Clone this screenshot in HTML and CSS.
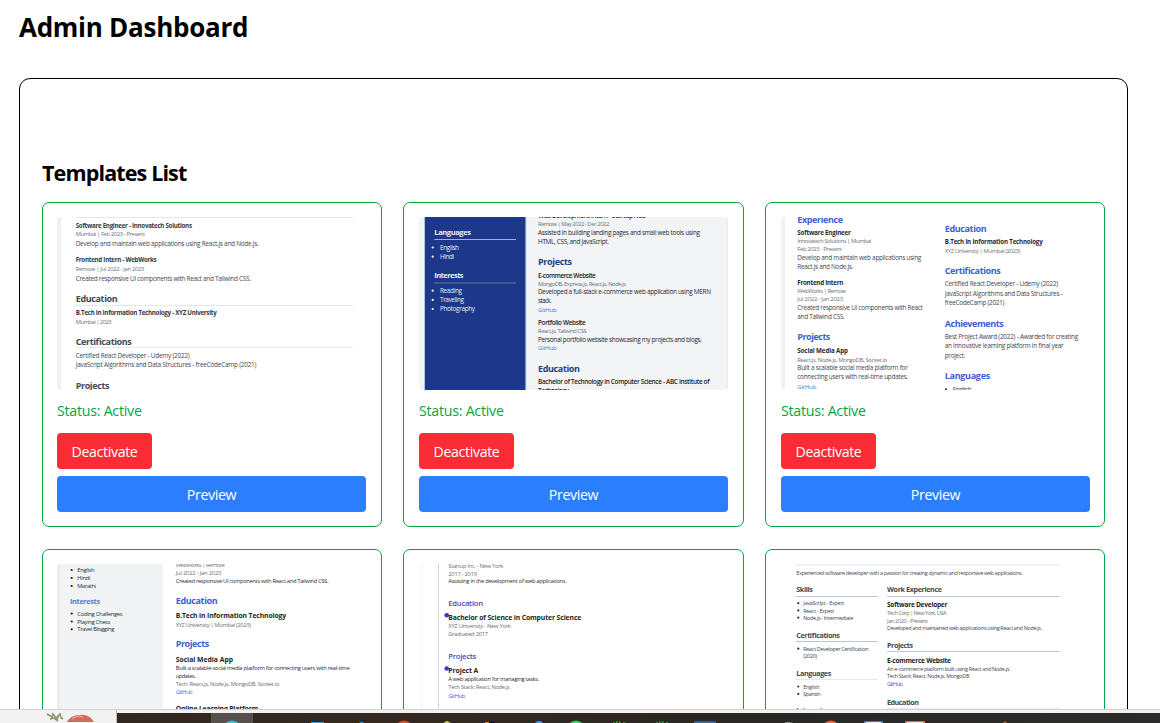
FILE: index.html
```
<!DOCTYPE html>
<html lang="en">
<head>
<meta charset="utf-8">
<title>Admin Dashboard</title>
<link rel="stylesheet" href="styles.css">
</head>
<body>
<main class="page">
  <h1 class="page-title">Admin Dashboard</h1>
  <section class="panel">
    <h2 class="panel-title">Templates List</h2>
    <div class="grid">

      <article class="card">
        <svg class="thumb slate" viewBox="0 0 309 173">
          <rect width="4" height="173" fill="#f0f0f1"/>
          <text class="h" x="18.7" y="-1" textLength="46">Experience</text>
          <path class="rule" d="M18.7 .5H296.3M18.7 88.5H296.3M18.7 130.5H296.3"/>
          <text class="b" x="18.7" y="10.7" textLength="116.3">Software Engineer - Innovatech Solutions</text>
          <text class="m" x="18.7" y="19.3" textLength="69.3">Mumbai | Feb 2023 - Present</text>
          <text x="18.7" y="29.3" textLength="183">Develop and maintain web applications using React.js and Node.js.</text>
          <text class="b" x="18.7" y="45" textLength="81">Frontend Intern - WebWorks</text>
          <text class="m" x="18.7" y="54" textLength="68.7">Remote | Jul 2022 - Jan 2023</text>
          <text x="18.7" y="64" textLength="175.3">Created responsive UI components with React and Tailwind CSS.</text>
          <text class="h" x="18.7" y="84.9" textLength="42">Education</text>
          <text class="b" x="18.7" y="98.3" textLength="141">B.Tech in Information Technology - XYZ University</text>
          <text class="m" x="18.7" y="107" textLength="36">Mumbai | 2023</text>
          <text class="h" x="18.7" y="127.9" textLength="56">Certifications</text>
          <text x="18.7" y="141.3" textLength="114">Certified React Developer - Udemy (2022)</text>
          <text x="18.7" y="150.3" textLength="180.7">JavaScript Algorithms and Data Structures - freeCodeCamp (2021)</text>
          <text class="h" x="18.7" y="171.7" textLength="33.7">Projects</text>
        </svg>
        <p class="status">Status: Active</p>
        <button class="btn btn-danger">Deactivate</button>
        <button class="btn btn-primary">Preview</button>
      </article>

      <article class="card">
        <svg class="thumb navy" viewBox="0 0 309 173">
          <rect width="309" height="173" fill="#f2f4f6"/>
          <rect x="5" width="102.3" height="173" fill="#b4bfdc"/>
          <rect x="6" width="100.3" height="173" fill="#1d388a"/>
          <rect x="307.5" width="1.5" height="173" fill="#e9ebee"/>
          <g class="side">
            <text class="sh" x="15.3" y="18.3" textLength="36.7">Languages</text>
            <text x="21" y="32.7" textLength="19">English</text>
            <text x="21" y="42" textLength="14">Hindi</text>
            <text class="sh" x="15.3" y="61" textLength="29.3">Interests</text>
            <text x="21" y="76" textLength="22">Reading</text>
            <text x="21" y="85" textLength="24">Traveling</text>
            <text x="21" y="94.3" textLength="35">Photography</text>
            <circle cx="13.7" cy="30.5" r="1.1"/><circle cx="13.7" cy="39.7" r="1.1"/>
            <circle cx="13.7" cy="73.7" r="1.1"/><circle cx="13.7" cy="82.9" r="1.1"/><circle cx="13.7" cy="92" r="1.1"/>
          </g>
          <path d="M15.3 22.5H97" stroke="#a7b2d2"/><path d="M15.3 66H97" stroke="#66749f"/>
          <text class="sb" x="119" y="1.4" textLength="108">Web Development Intern - Startup Hub</text>
          <text class="m" x="119" y="9.3" textLength="71.3">Remote | May 2022 - Dec 2022</text>
          <text x="119" y="18" textLength="162">Assisted in building landing pages and small web tools using</text>
          <text x="119" y="27" textLength="71">HTML, CSS, and JavaScript.</text>
          <text class="h" x="119" y="47.9" textLength="34">Projects</text>
          <text class="sb" x="119" y="60.7" textLength="57.7">E-commerce Website</text>
          <text class="m" x="119" y="68.7" textLength="88">MongoDB, Express.js, React.js, Node.js</text>
          <text x="119" y="77" textLength="173">Developed a full-stack e-commerce web application using MERN</text>
          <text x="119" y="85.7" textLength="13.7">stack.</text>
          <text class="a" x="119" y="95.1" textLength="18.7">GitHub</text>
          <text class="sb" x="119" y="107.7" textLength="47.7">Portfolio Website</text>
          <text class="m" x="119" y="116" textLength="48.7">React.js, Tailwind CSS</text>
          <text x="119" y="124.7" textLength="164">Personal portfolio website showcasing my projects and blogs.</text>
          <text class="a" x="119" y="133.3" textLength="18.7">GitHub</text>
          <text class="h" x="119" y="154.5" textLength="42">Education</text>
          <text class="sb" x="119" y="167" textLength="171.5">Bachelor of Technology in Computer Science - ABC Institute of</text>
          <text class="sb" x="119" y="175.7" textLength="31">Technology</text>
        </svg>
        <p class="status">Status: Active</p>
        <button class="btn btn-danger">Deactivate</button>
        <button class="btn btn-primary">Preview</button>
      </article>

      <article class="card">
        <svg class="thumb blue" viewBox="0 0 309 173">
          <rect width="4" height="173" fill="#f2f2f3"/>
          <text class="h" x="16.3" y="5.5" textLength="45.7">Experience</text>
          <text class="b" x="16.3" y="18" textLength="53.5">Software Engineer</text>
          <text class="m" x="16.3" y="26.3" textLength="74">Innovatech Solutions | Mumbai</text>
          <text class="m" x="16.3" y="33.9" textLength="44.7">Feb 2023 - Present</text>
          <text x="16.3" y="43" textLength="124">Develop and maintain web applications using</text>
          <text x="16.3" y="52" textLength="56">React.js and Node.js.</text>
          <text class="b" x="16.3" y="67.7" textLength="46">Frontend Intern</text>
          <text class="m" x="16.3" y="76" textLength="48.7">WebWorks | Remote</text>
          <text class="m" x="16.3" y="83.7" textLength="45.7">Jul 2022 - Jan 2023</text>
          <text x="16.3" y="92.7" textLength="125.5">Created responsive UI components with React</text>
          <text x="16.3" y="102" textLength="47.5">and Tailwind CSS.</text>
          <text class="h" x="16.3" y="123.3" textLength="33">Projects</text>
          <text class="b" x="16.3" y="136" textLength="50.7">Social Media App</text>
          <text class="m" x="16.3" y="144.5" textLength="90">React.js, Node.js, MongoDB, Socket.io</text>
          <text x="16.3" y="153.3" textLength="110.5">Built a scalable social media platform for</text>
          <text x="16.3" y="162.3" textLength="111">connecting users with real-time updates.</text>
          <text class="a" x="16.3" y="171.5" textLength="19">GitHub</text>
          <text class="h" x="163.7" y="14.5" textLength="42">Education</text>
          <text class="b" x="163.7" y="27.3" textLength="98">B.Tech in Information Technology</text>
          <text class="m" x="163.7" y="36" textLength="75.5">XYZ University | Mumbai (2023)</text>
          <text class="h" x="163.7" y="56.5" textLength="56">Certifications</text>
          <text x="163.7" y="69.3" textLength="113.5">Certified React Developer - Udemy (2022)</text>
          <text x="163.7" y="78.7" textLength="118">JavaScript Algorithms and Data Structures -</text>
          <text x="163.7" y="88" textLength="59.7">freeCodeCamp (2021)</text>
          <text class="h" x="163.7" y="109.5" textLength="59">Achievements</text>
          <text x="163.7" y="122.3" textLength="133.5">Best Project Award (2022) - Awarded for creating</text>
          <text x="163.7" y="131.3" textLength="119">an innovative learning platform in final year</text>
          <text x="163.7" y="140.7" textLength="20.7">project.</text>
          <text class="h" x="163.7" y="162" textLength="45.5">Languages</text>
          <text x="171.7" y="174.7" textLength="19">English</text>
          <circle cx="165" cy="172.3" r="1.1" fill="#333b47"/>
        </svg>
        <p class="status">Status: Active</p>
        <button class="btn btn-danger">Deactivate</button>
        <button class="btn btn-primary">Preview</button>
      </article>

      <article class="card">
        <svg class="thumb split" viewBox="0 0 309 173">
          <rect width="106" height="173" fill="#f1f3f5"/>
          <rect width="3" height="173" fill="#ececee"/>
          <g class="list">
            <text x="20.3" y="7.9" textLength="17.3">English</text>
            <text x="20.3" y="15.9" textLength="13">Hindi</text>
            <text x="20.3" y="24" textLength="18.7">Marathi</text>
            <text x="20.3" y="51.5" textLength="45.3">Coding Challenges</text>
            <text x="20.3" y="59.5" textLength="33">Playing Chess</text>
            <text x="20.3" y="67.3" textLength="37">Travel Blogging</text>
            <circle cx="14.7" cy="6" r="1.1"/><circle cx="14.7" cy="14" r="1.1"/><circle cx="14.7" cy="22" r="1.1"/>
            <circle cx="14.7" cy="49.6" r="1.1"/><circle cx="14.7" cy="57.5" r="1.1"/><circle cx="14.7" cy="65.3" r="1.1"/>
          </g>
          <text class="sh" x="13" y="39.9" textLength="30">Interests</text>
          <text class="m" x="118.7" y="3.4" textLength="49">WebWorks | Remote</text>
          <text class="m" x="118.7" y="11.3" textLength="45.7">Jul 2022 - Jan 2023</text>
          <text x="118.7" y="19" textLength="153">Created responsive UI components with React and Tailwind CSS.</text>
          <text class="h" x="118.7" y="39.9" textLength="42">Education</text>
          <text class="bb" x="118.7" y="54.2" textLength="110.5">B.Tech in Information Technology</text>
          <text class="m" x="118.7" y="63" textLength="75.3">XYZ University | Mumbai (2023)</text>
          <text class="h" x="118.7" y="83.3" textLength="33.5">Projects</text>
          <text class="bb" x="118.7" y="97.5" textLength="57.3">Social Media App</text>
          <text x="118.7" y="106" textLength="174">Built a scalable social media platform for connecting users with real-time</text>
          <text x="118.7" y="113.7" textLength="20">updates.</text>
          <text class="m" x="118.7" y="121.7" textLength="103.7">Tech: React.js, Node.js, MongoDB, Socket.io</text>
          <text class="a" x="118.7" y="130" textLength="17">GitHub</text>
          <text class="bb" x="118.7" y="147" textLength="82.5">Online Learning Platform</text>
        </svg>
        <p class="status">Status: Active</p>
        <button class="btn btn-danger">Deactivate</button>
        <button class="btn btn-primary">Preview</button>
      </article>

      <article class="card">
        <svg class="thumb violet" viewBox="0 0 309 173">
          <rect x="1" width="3.5" height="173" fill="#fafafa"/>
          <rect x="19" width="1" height="173" fill="#ccd3e6"/>
          <text class="m" x="29.3" y="3.9" textLength="55">Startup Inc. - New York</text>
          <text class="m" x="29.3" y="11.5" textLength="28.7">2017 - 2019</text>
          <text x="29.3" y="19.3" textLength="118.5">Assisting in the development of web applications.</text>
          <text class="h" x="29.3" y="41.5" textLength="34.7">Education</text>
          <circle cx="27.7" cy="51.3" r="2.3"/>
          <text class="bb" x="29.3" y="55.9" textLength="133">Bachelor of Science in Computer Science</text>
          <text class="m" x="29.3" y="64.3" textLength="62.5">XYZ University - New York</text>
          <text class="m" x="29.3" y="72" textLength="39.7">Graduated: 2017</text>
          <text class="h" x="29.3" y="94.7" textLength="28">Projects</text>
          <circle cx="27.7" cy="104.5" r="2.3"/>
          <text class="bb" x="29.3" y="108.7" textLength="30">Project A</text>
          <text x="29.3" y="117" textLength="91">A web application for managing tasks.</text>
          <text class="m" x="29.3" y="124.9" textLength="61.5">Tech Stack: React, Node.js</text>
          <text class="a" x="29.3" y="133.5" textLength="17">GitHub</text>
        </svg>
        <p class="status">Status: Active</p>
        <button class="btn btn-danger">Deactivate</button>
        <button class="btn btn-primary">Preview</button>
      </article>

      <article class="card">
        <svg class="thumb classic" viewBox="0 0 309 173">
          <path d="M15 1H278.7M15 115.5H97M106 144.7H278.7" stroke="#e0e8f2"/>
          <path d="M15 32.5H97M15 77.5H97M106 32.5H278.7M106 87.5H278.7" stroke="#bcc4de"/>
          <text x="15.3" y="10.5" textLength="226.5">Experienced software developer with a passion for creating dynamic and responsive web applications.</text>
          <text class="h" x="15.3" y="28" textLength="16.5">Skills</text>
          <text x="22.3" y="41" textLength="41">JavaScript - Expert</text>
          <text x="22.3" y="48.5" textLength="31">React - Expert</text>
          <text x="22.3" y="55.7" textLength="50">Node.js - Intermediate</text>
          <text class="h" x="15.3" y="73.7" textLength="43.5">Certifications</text>
          <text x="22.3" y="86.7" textLength="65.3">React Developer Certification</text>
          <text x="22.3" y="94.3" textLength="13.7">(2020)</text>
          <text class="h" x="15.3" y="111.5" textLength="35">Languages</text>
          <text x="22.3" y="124.5" textLength="16.3">English</text>
          <text x="22.3" y="132" textLength="17.3">Spanish</text>
          <text class="h" x="15.3" y="149.3" textLength="30">Interests</text>
          <g fill="#2b3442">
            <circle cx="17.3" cy="39.2" r="1.1"/><circle cx="17.3" cy="46.4" r="1.1"/><circle cx="17.3" cy="53.7" r="1.1"/>
            <circle cx="17.3" cy="84.7" r="1.1"/><circle cx="17.3" cy="122.5" r="1.1"/><circle cx="17.3" cy="129.9" r="1.1"/>
          </g>
          <text class="h" x="106" y="28" textLength="55">Work Experience</text>
          <text class="bb" x="106" y="43" textLength="60.5">Software Developer</text>
          <text class="m" x="106" y="51.3" textLength="59.5">Tech Corp | New York, USA</text>
          <text class="m" x="106" y="58.5" textLength="41">Jan 2020 - Present</text>
          <text x="106" y="65.9" textLength="155">Developed and maintained web applications using React and Node.js.</text>
          <text class="h" x="106" y="83.5" textLength="26">Projects</text>
          <text class="bb" x="106" y="98.7" textLength="64">E-commerce Website</text>
          <text x="106" y="106.9" textLength="123.5">An e-commerce platform built using React and Node.js.</text>
          <text x="106" y="114.2" textLength="82.5">Tech Stack: React, Node.js, MongoDB</text>
          <text class="a" x="106" y="122" textLength="16">GitHub</text>
          <text class="h" x="106" y="140.5" textLength="32">Education</text>
        </svg>
        <p class="status">Status: Active</p>
        <button class="btn btn-danger">Deactivate</button>
        <button class="btn btn-primary">Preview</button>
      </article>

    </div>
  </section>
</main>

<footer class="taskbar">
  <div class="search">
    <svg width="116" height="12" viewBox="0 0 116 12">
      <path d="M47 4l5 3 1-3 3 4 4-4 1 4 2 1M50 9l4-1 4 3M57 11l1-5" fill="none" stroke="#8b9a6b" stroke-width="1.6"/>
      <path d="M67 12c2-4 6-7 13-7 6-1 11 2 14 7z" fill="#d5695f"/>
      <path d="M72 9c4-3 8-3 11-2" fill="none" stroke="#eba097" stroke-width="1.5"/>
    </svg>
  </div>
  <svg class="apps" width="1043" height="10" viewBox="117 0 1043 10">
    <rect x="211" width="42" height="10" fill="#57514e"/>
    <circle cx="232" cy="17" r="9.5" fill="#35c1c9"/>
    <rect x="311" y="9" width="13" height="1" fill="#2aa8e8"/>
    <path d="M359 10l3-1.5 2 1.5z" fill="#22a3e8"/>
    <circle cx="404" cy="17" r="9.5" fill="#e04a35"/>
    <path d="M443 10l2-1 1-1h2l1 1 2 1z" fill="#b7c34a"/>
    <path d="M485 9h4v1h-4z" fill="#d98324"/><path d="M489 9h6v1h-6z" fill="#0c0c0f"/>
    <path d="M535 10l2-2h4l2 2z" fill="#24a1dc"/>
    <circle cx="576" cy="17" r="9.5" fill="#27d366"/>
    <path d="M613 9h2v1h-2zM616 8h1.500v2h-1.500zM619 8h1.500v2h-1.500zM623 9h2v1h-2zM656 9h2v1h-2zM659 8h1.500v2h-1.500zM662 8h1.500v2h-1.500zM666 9h2v1h-2z" fill="#3f8d3b"/>
    <rect x="694" y="8" width="22" height="4" rx="1" fill="#2d659b"/>
    <path d="M785 9h5l3 1h-8z" fill="#8b8d8b"/>
    <circle cx="831" cy="17" r="9.500" fill="#ed6437"/>
    <rect x="864" y="8" width="19" height="4" fill="#4a80cf"/><rect x="866" y="9" width="15" height="1" fill="#d7e3f5"/>
    <rect x="905" y="8" width="20" height="4" fill="#e46c43"/><rect x="907" y="9" width="16" height="1" fill="#f7ded2"/>
    <path d="M1003 10l1-1.500h2l1 1.500z" fill="#c65f2b"/>
  </svg>
</footer>
</body>
</html>
```
FILE: styles.css
```
* { box-sizing: border-box; }

body {
  margin: 0;
  height: 723px;
  display: flex;
  flex-direction: column;
  overflow: hidden;
  background: #fff;
  color: #000;
  font-family: "Open Sans", "Noto Sans", sans-serif;
}

.page {
  height: 709px;
  flex: none;
  overflow: hidden;
  padding: 9px 32px 0 19px;
}

.page-title {
  margin: 0 0 33px;
  font-size: 26px;
  line-height: 36px;
  font-weight: 700;
  letter-spacing: -0.27px;
}

.panel {
  border: 1px solid #000;
  border-radius: 11px;
  padding: 79px 22px 22px;
}

.panel-title {
  margin: 0 0 14px;
  font-size: 21.5px;
  line-height: 30px;
  font-weight: 700;
  letter-spacing: -0.86px;
}

.grid {
  display: grid;
  grid-template-columns: 340px 341px 340px;
  gap: 22px 21px;
}

.card {
  height: 325px;
  padding: 14px 15px 14px 14px;
  border: 1px solid #00a63e;
  border-radius: 7px;
  display: flex;
  flex-direction: column;
  align-items: flex-start;
}

.card:nth-child(3n + 2) { padding-left: 15px; }
.card:nth-child(3n) { padding-left: 15px; padding-right: 14px; }

.status {
  margin: 9px 0 10px;
  font-size: 14.2px;
  line-height: 24px;
  letter-spacing: -0.25px;
  color: #00a63e;
}

.btn {
  height: 36px;
  flex: none;
  border: 0;
  border-radius: 4px;
  padding: 0;
  color: #fff;
  font: 14.2px "Open Sans", "Noto Sans", sans-serif;
  letter-spacing: -0.36px;
}

.btn-danger { width: 95px; background: #fb2c36; }
.btn-primary { align-self: stretch; margin-top: 7px; background: #2b7fff; }

/* Template thumbnails */
.thumb {
  display: block;
  flex: none;
  width: 309px;
  height: 173px;
  border-radius: 4px;
  overflow: hidden;
}

.thumb text { font-size: 6.4px; fill: #3e4754; }
.thumb .m { font-size: 5.8px; fill: #6a717c; }
.thumb .b { font-weight: 700; font-size: 6.2px; fill: #303a48; }
.thumb .sb { font-weight: 600; fill: #1c2026; }
.thumb .bb { font-weight: 700; font-size: 6.8px; fill: #1b1f26; }
.thumb .h { font-weight: 700; font-size: 9px; fill: #3f4957; }
.thumb .a { font-size: 6px; fill: #3f78da; }
.thumb .rule { stroke: #e6e7ea; fill: none; }

.navy text { fill: #24282e; }
.navy .h { fill: #213f8c; }
.navy .side text { fill: #e6ebf7; }
.navy .side .sh { font-weight: 700; font-size: 7.5px; }
.navy .side circle { fill: #fff; }

.blue .h, .split .h { fill: #3c60d4; }
.blue .b { fill: #1f2937; }
.split text { font-size: 5.8px; fill: #2a2e34; }
.split .sh { font-size: 7.2px; font-weight: 700; fill: #4f7cdc; }
.split .list circle { fill: #222; }

.violet text { font-size: 5.8px; fill: #2a2e34; }
.violet .h { font-size: 7.6px; font-weight: 600; fill: #5443bf; }
.violet .a { fill: #6a55cf; }
.violet circle { fill: #4632c8; }

.classic text { font-size: 5.5px; fill: #414a58; }
.classic .m { font-size: 5.5px; }
.classic .h { font-size: 7.2px; }
.classic .bb { font-size: 6.6px; }
.classic .a { fill: #6a4fc4; }

/* Desktop taskbar */
.taskbar {
  height: 14px;
  flex: none;
  display: flex;
  align-items: flex-end;
  background: linear-gradient(#d2d2d2 0 1px, #f2f2f2 1px 4px, transparent 4px),
    linear-gradient(90deg, #30261f, #35291f 35%, #2a2724 60%, #2b2c2b);
}

.search {
  width: 117px;
  height: 13px;
  border-right: 1px solid #bdbdbd;
  background: #f2f2f2;
}

.search svg, .apps { display: block; }
```
